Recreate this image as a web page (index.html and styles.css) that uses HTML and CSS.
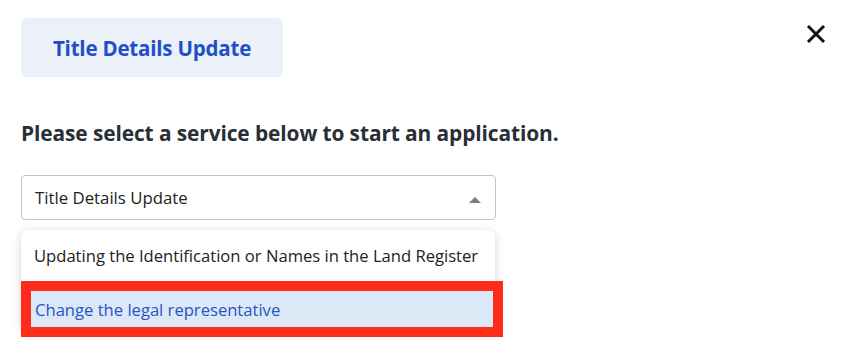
FILE: index.html
```html
<!DOCTYPE html>
<html lang="en">
<head>
    <meta charset="UTF-8">
    <meta name="viewport" content="width=device-width, initial-scale=1.0">
    <title>Select a service</title>
    <link rel="stylesheet" href="styles.css">
</head>
<body>
	<div class="modal">
		<div class="modalHeader">
			<div class="serviceTab">Title Details Update</div>
			<button class="closeBtn" aria-label="Close">
				<svg width="20" height="20" viewBox="0 0 20 20"><path d="M2 2 L18 18 M18 2 L2 18" stroke="#111" stroke-width="3" fill="none"/></svg>
			</button>
		</div>
		<h2 class="prompt">Please select a service below to start an application.</h2>
		<div class="selectBox">
			<span>Title Details Update</span>
			<span class="caret"></span>
		</div>
		<ul class="optionList">
			<li>Updating the Identification or Names in the Land Register</li>
			<li class="active">Change the legal representative</li>
		</ul>
	</div>
</body>
</html>
```

FILE: styles.css
```css
body { margin: 0; background: #fff; font-family: "Open Sans", Lato, sans-serif; color: #222; }

.modal { padding: 18px 16px 0 21px; }
.modalHeader { display: flex; justify-content: space-between; align-items: flex-start; }
.serviceTab { width: 262px; height: 59px; box-sizing: border-box; background: #ebf0f9; border-radius: 6px; display: flex; align-items: center; justify-content: center; color: #1f4fc4; font-weight: 700; font-size: 20.5px; letter-spacing: -0.2px; }
.closeBtn { background: none; border: none; padding: 0; margin-top: 6px; cursor: pointer; }

.prompt { margin: 42px 0 0; font-size: 20.9px; font-weight: 700; color: #2a2e36; letter-spacing: -0.1px; }

.selectBox { margin-top: 28px; width: 475px; height: 45px; box-sizing: border-box; border: 1px solid #c4c4c4; border-radius: 4px; display: flex; align-items: center; justify-content: space-between; padding: 0 14px 0 13px; font-size: 16.8px; color: #222; }
.caret { width: 0; height: 0; border-left: 6px solid transparent; border-right: 6px solid transparent; border-bottom: 6px solid #7d7d7d; margin-top: 4px; }

.optionList { list-style: none; margin: 10px 0 0; padding: 0; width: 474px; border-radius: 8px 8px 0 0; box-shadow: 0 2px 10px rgba(0, 0, 0, 0.18); background: #fff; font-size: 16.6px; line-height: 23px; white-space: nowrap; }
.optionList > li { padding: 14px 8px 14px 13px; color: #222; }
.optionList > li.active { margin: 10px 2px 10px 10px; padding: 7px 4px 6px; background: #dce8f6; color: #2654c6; outline: 10px solid #fe2d1b; }
```
